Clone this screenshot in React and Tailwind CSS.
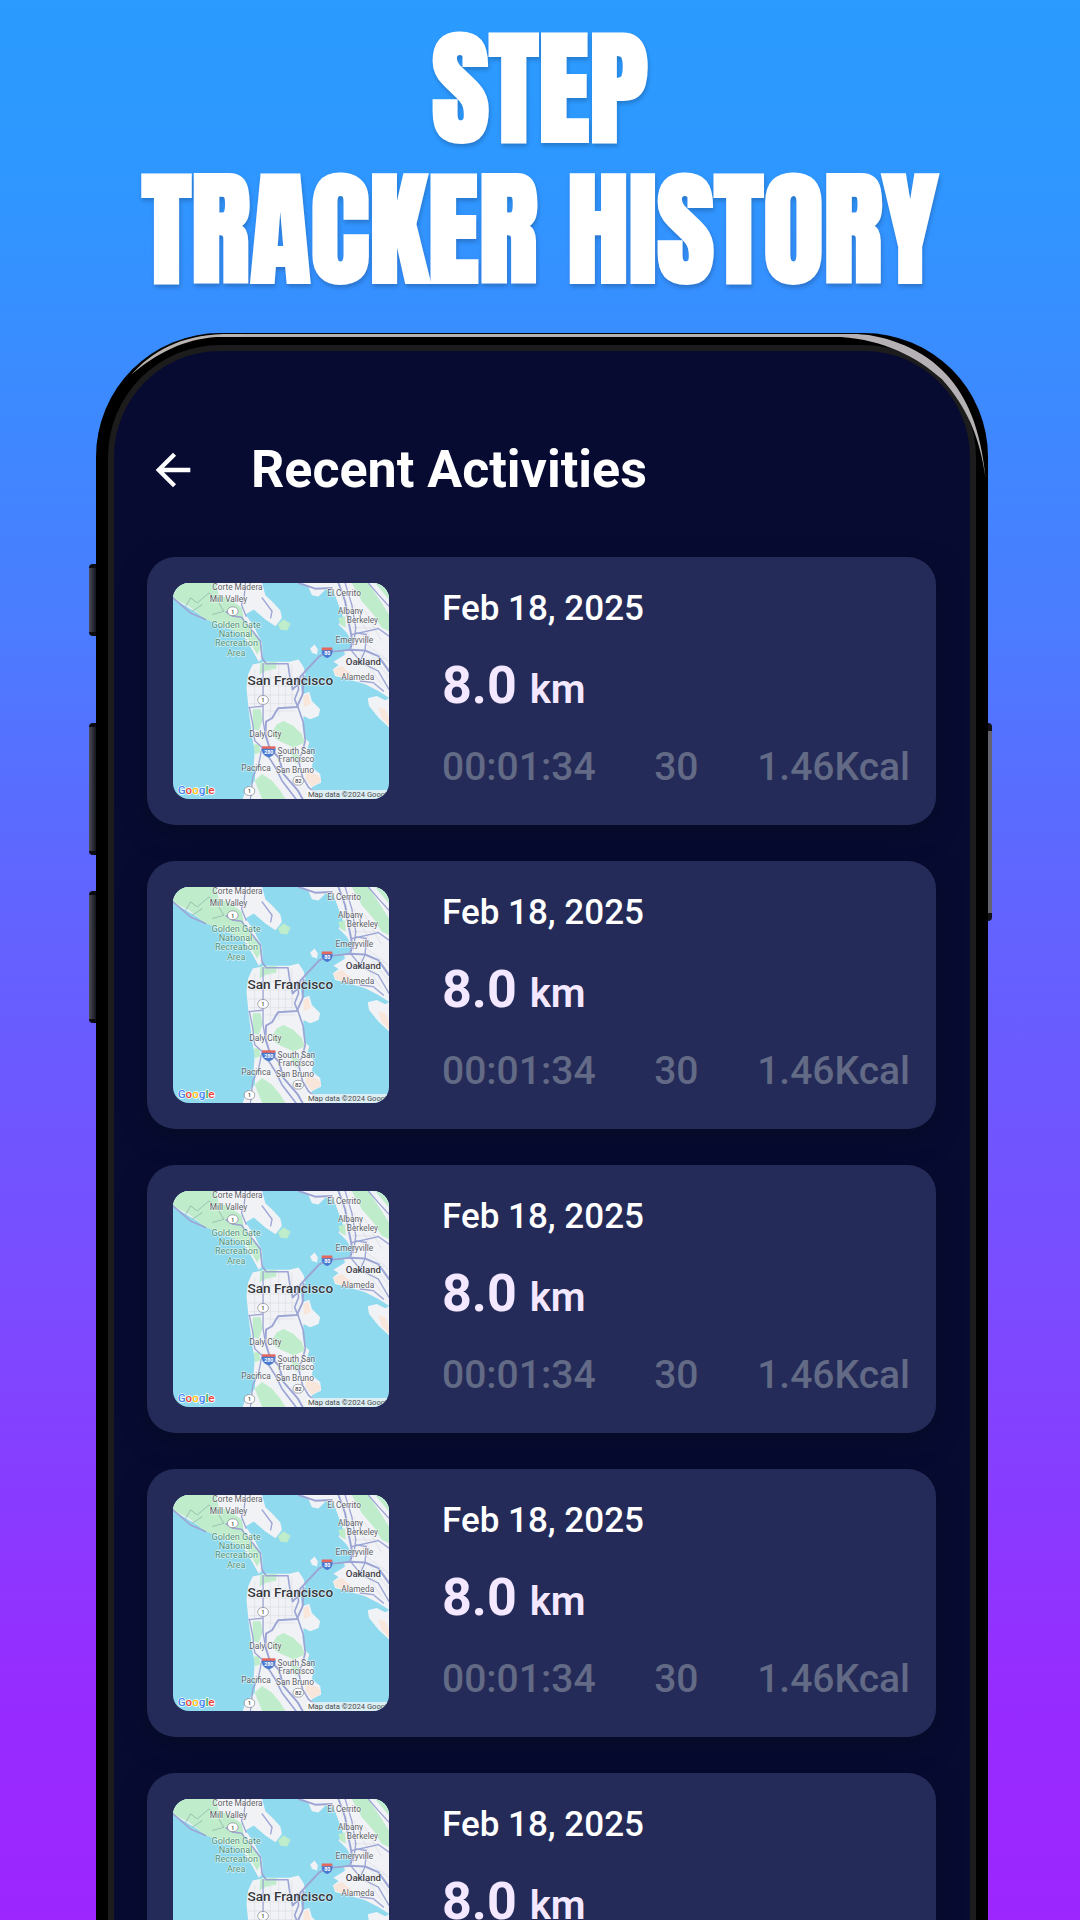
import React from "react";

const activities = Array.from({ length: 5 }, (_, id) => ({
  id,
  date: "Feb 18, 2025",
  distance: "8.0",
  time: "00:01:34",
  steps: "30",
  energy: "1.46Kcal",
}));

const smallLabels = [
  ["Corte Madera", 216, 46],
  ["Mill Valley", 189, 81],
  ["El Cerrito", 537, 63],
  ["Albany", 556, 117],
  ["Berkeley", 592, 145],
  ["Emeryville", 568, 206],
  ["Alameda", 578, 317],
  ["Daly City", 300, 488],
  ["South San", 393, 540],
  ["Francisco", 393, 563],
  ["Pacifica", 272, 592],
  ["San Bruno", 389, 596],
];

const parkLabels = [
  ["Golden Gate", 212, 159],
  ["National", 210, 187],
  ["Recreation", 213, 216],
  ["Area", 212, 244],
];

const routeMarkers = [
  ["1", 202, 110],
  ["1", 293, 377],
  ["1", 252, 651],
  ["82", 399, 620],
];

function MapThumbnail() {
  return (
    <svg
      viewBox="22 25 650 650"
      role="img"
      aria-label="Map of San Francisco"
      className="size-[216px] shrink-0 rounded-2xl bg-[#8fdaee] font-['Roboto',sans-serif]"
    >
      {/* land */}
      <g fill="#f1f2f6">
        <path d="M22 25H290L300 62L325 85L345 108L350 130L330 155L300 135L265 105L240 120L262 150L290 205L292 250L280 262L262 230L230 175L180 160L120 130L70 100L22 72Z" />
        <path d="M400 25H672V370L640 350L600 330L560 318L510 305L503 285L520 272L505 262L540 240L535 228L555 222L560 200L545 175L520 150L535 130L520 90L505 50L480 45L460 66L440 62L430 38Z" />
        <path d="M612 395L608 372L635 365L660 378L672 372V460L640 430Z" />
        <path d="M262 270L300 262L372 262L400 255L415 278L420 300L405 330L412 360L432 352L440 380L465 405L460 425L435 435L415 425L412 455L418 490L432 505L425 530L445 545L440 580L465 600L468 625L440 640L450 675H232L240 650L268 620L270 590L265 570L268 530L262 500L250 410L243 340L248 300Z" />
        <path d="M435 222L448 210L458 225L455 240L440 235Z" />
      </g>
      <g fill="#bfeccb">
        <path d="M22 25H150L160 60L195 75L230 100L235 135L280 190L290 215L275 240L245 190L190 160L120 135L70 95L22 70Z" />
        <path d="M338 150L355 134L376 148L366 168L345 166Z" />
        <path d="M560 25H610L640 70L672 120V170L650 160L625 120L590 80Z" />
        <path d="M630 25H672V75Z" />
        <path d="M285 265L335 262L332 283L300 290L282 300Z" />
        <path d="M315 480L335 450L355 440L385 455L410 480L418 505L385 520L340 500Z" />
        <path d="M262 405L285 405L292 435L280 470L262 465Z" />
        <path d="M265 510H282L285 535L268 540Z" />
        <path d="M268 620L290 600L320 620L345 650L360 675H290Z" />
        <path d="M375 535L400 540L410 565L390 568Z" />
        <path d="M520 130L540 125L542 160L525 150Z" />
      </g>
      <g fill="#f9e6da">
        <path d="M505 285L530 275L560 300L545 315L512 302Z" />
        <path d="M640 400L660 405L672 430V455L650 430Z" />
        <path d="M425 590L462 605L468 622L440 638L420 615Z" />
        <path d="M415 365L430 358L436 390L415 400Z" />
      </g>
      {/* street grid */}
      <g stroke="#d9dce6" strokeWidth="2" fill="none">
        <path d="M248 310H410M246 335H405M246 362H400M250 388H395M268 285V400M315 270V430M340 265V425M360 300V400M380 270V390M300 410H390M585 240L650 330M610 230L672 310M565 90L620 200M600 110L650 200M560 160H640M575 260L660 250M590 200L672 260" />
      </g>
      {/* trails */}
      <g stroke="#8ba9a4" strokeWidth="2" fill="none">
        <path d="M60 95L75 70L95 85L130 55L160 80M140 120L175 110L160 85M80 110L110 90" />
      </g>
      {/* highways */}
      <g stroke="#9ca5d3" strokeWidth="6" fill="none" strokeLinejoin="round" strokeLinecap="round">
        <path d="M22 70L75 115L120 135M182 112L200 124L228 128L262 170L285 200L290 250L302 268L368 268L374 310L382 345" strokeWidth="5" />
        <path d="M240 25L236 70L228 90L242 125M290 70L320 110L316 130" strokeWidth="4" />
        <path d="M293 268V440L302 490" strokeWidth="4" />
        <path d="M382 345L398 330L406 306L462 246L490 233L555 226L600 228L640 245L672 290" />
        <path d="M415 305L412 360L395 398L338 402L320 432L302 442L300 480L312 520L340 550L355 600L398 650L412 675" />
        <path d="M398 398L414 445L420 500L412 530L400 560L412 610L430 640L475 675" strokeWidth="5" />
        <path d="M395 310L400 345L388 375L398 398" strokeWidth="5" />
        <path d="M250 400L290 396M252 400L262 450L268 500L290 520L280 570L262 610L255 675" strokeWidth="4" />
        <path d="M292 520L330 580L350 620L392 675" strokeWidth="5" />
        <path d="M400 25L450 42L500 40M520 25L540 80L552 150L562 200L555 226" />
        <path d="M540 25L560 90L572 160L565 210" strokeWidth="4" />
        <path d="M562 180L640 162L672 185M600 228L604 180L572 175M560 230L590 265L640 290L672 345M600 228L585 262L560 262M585 320L625 325L655 350" strokeWidth="4" />
        <path d="M610 25L640 60L672 95" strokeWidth="4" />
      </g>
      {/* interstate shields */}
      <g>
        <path d="M470 222H501C505 238 498 246 486 251C474 246 467 238 470 222Z" fill="#4b7bd0" />
        <path d="M470 219H501V227H470Z" fill="#e5675f" />
        <text x="486" y="242" textAnchor="middle" fontSize="16" fontWeight="700" fill="#fff">80</text>
        <path d="M290 520H330C333 535 325 545 310 550C295 545 287 535 290 520Z" fill="#4b7bd0" />
        <path d="M290 516H330V524H290Z" fill="#e5675f" />
        <text x="310" y="540" textAnchor="middle" fontSize="16" fontWeight="700" fill="#fff">280</text>
      </g>
      {routeMarkers.map(([label, x, y]) => (
        <g key={`${x}-${y}`}>
          <rect x={x - 16} y={y - 13} width="32" height="26" rx="13" fill="#fff" stroke="#7b7f86" strokeWidth="2" />
          <text x={x} y={y + 7} textAnchor="middle" fontSize="18" fontWeight="500" fill="#444">
            {label}
          </text>
        </g>
      ))}
      <g textAnchor="middle" stroke="#fff" strokeOpacity="0.6" strokeWidth="4" strokeLinejoin="round" style={{ paintOrder: "stroke" }}>
        {smallLabels.map(([label, x, y]) => (
          <text key={label} x={x} y={y} fontSize="25" fill="#5d5f68">
            {label}
          </text>
        ))}
        {parkLabels.map(([label, x, y]) => (
          <text key={label} x={x} y={y} fontSize="27" fill="#4f9278">
            {label}
          </text>
        ))}
        <text x="595" y="272" fontSize="29" fontWeight="500" fill="#3f4046">Oakland</text>
        <text x="375" y="331" fontSize="41" fontWeight="500" fill="#36373c">San Francisco</text>
      </g>
      <rect x="424" y="648" width="248" height="27" fill="#f5f5f5" fillOpacity="0.75" />
      <text x="428" y="668" fontSize="23" fill="#4d4d4d">Map data ©2024 Google</text>
      <text
        x="36"
        y="661"
        fontSize="35"
        fontWeight="500"
        stroke="#fff"
        strokeWidth="4"
        style={{ paintOrder: "stroke" }}
      >
        <tspan fill="#4285f4">G</tspan>
        <tspan fill="#ea4335">o</tspan>
        <tspan fill="#fbbc05">o</tspan>
        <tspan fill="#4285f4">g</tspan>
        <tspan fill="#34a853">l</tspan>
        <tspan fill="#ea4335">e</tspan>
      </text>
    </svg>
  );
}

function ActivityCard({ activity }) {
  return (
    <li className="flex gap-[53px] rounded-[28px] bg-[#252b58] p-[26px] shadow-[0_8px_24px_rgb(4_12_28/0.6)]">
      <MapThumbnail />
      <div className="flex min-w-0 flex-1 flex-col justify-between">
        <p className="pb-1.5 text-[35px] leading-[52px] font-medium text-white">{activity.date}</p>
        <p className="text-[52px] leading-[64px] font-bold text-[#f3e8ff]">
          {activity.distance} <span className="text-[40px] font-semibold">km</span>
        </p>
        <div className="flex justify-between text-[39px] leading-[64px] font-medium text-[#626a85]">
          <span>{activity.time}</span>
          <span>{activity.steps}</span>
          <span>{activity.energy}</span>
        </div>
      </div>
    </li>
  );
}

function FrameHighlights() {
  return (
    <div aria-hidden="true" className="pointer-events-none">
      <svg viewBox="48 39 441 441" className="absolute top-0 left-0 size-[147px]">
        <path d="M155 163C215 95 300 46 430 42H489V51H410C310 58 230 100 155 163Z" fill="#b9b4b0" />
      </svg>
      <div className="absolute inset-x-[147px] top-px h-[3px] bg-[#b5b1b1]" />
      <svg viewBox="122 39 441 441" className="absolute top-0 right-0 size-[147px]">
        <path
          d="M122 42H170C262 46 372 90 439 164C500 232 540 320 556 475C538 350 500 262 425 178C350 110 250 60 122 51Z"
          fill="#b5b1b4"
        />
      </svg>
    </div>
  );
}

function SideButtons() {
  const key = "absolute w-[7px] bg-linear-to-r from-[#4c4d59] to-[#15161e] border-y-4 border-[#0b0b10]";
  return (
    <div aria-hidden="true">
      <div className={`${key} top-[231px] -left-[7px] h-[72px] rounded-l-sm`} />
      <div className={`${key} top-[390px] -left-[7px] h-[132px] rounded-l-sm`} />
      <div className={`${key} top-[558px] -left-[7px] h-[132px] rounded-l-sm`} />
      <div className="absolute top-[390px] -right-[4px] h-[198px] w-[4px] rounded-r-sm border-y-8 border-[#111116] bg-[#62636f]" />
    </div>
  );
}

export default function App() {
  return (
    <main className="flex h-screen flex-col overflow-hidden bg-[linear-gradient(to_bottom,#2b9bff_0%,#2d98ff_8%,#388eff_17%,#4a7dff_32%,#6065ff_46%,#7a4cff_67%,#962cff_88%,#9d26ff_100%)] font-['Roboto',sans-serif]">
      <h1 className="pt-[18px] pb-[33px] text-center font-['Impact','Anton','Roboto_Condensed','Liberation_Sans_Narrow',sans-serif] text-[124px] leading-[141px] font-bold text-white uppercase [text-shadow:1px_3px_4px_rgb(0_0_0/0.2)]">
        Step
        <br />
        Tracker History
      </h1>
      <section className="relative mr-[92px] ml-24 flex-1 rounded-t-[124px] bg-black px-3 pt-3">
        <SideButtons />
        <FrameHighlights />
        <div className="h-full rounded-t-[112px] bg-[#1c1c1c] px-[6px] pt-[6px]">
          <div className="h-full rounded-t-[106px] bg-[#070b32] pr-[34px] pl-[33px]">
            <header className="flex items-center gap-[52px] pt-[85px] pb-[53px]">
              <button type="button" aria-label="Back" className="text-white">
                <svg viewBox="0 0 24 24" fill="currentColor" className="size-[52px]">
                  <path d="M20 11H7.83l5.59-5.59L12 4l-8 8 8 8 1.41-1.41L7.83 13H20v-2z" />
                </svg>
              </button>
              <h2 className="text-[52px] leading-[68px] font-bold text-white">Recent Activities</h2>
            </header>
            <ul className="flex flex-col gap-9">
              {activities.map((activity) => (
                <ActivityCard key={activity.id} activity={activity} />
              ))}
            </ul>
          </div>
        </div>
      </section>
    </main>
  );
}
